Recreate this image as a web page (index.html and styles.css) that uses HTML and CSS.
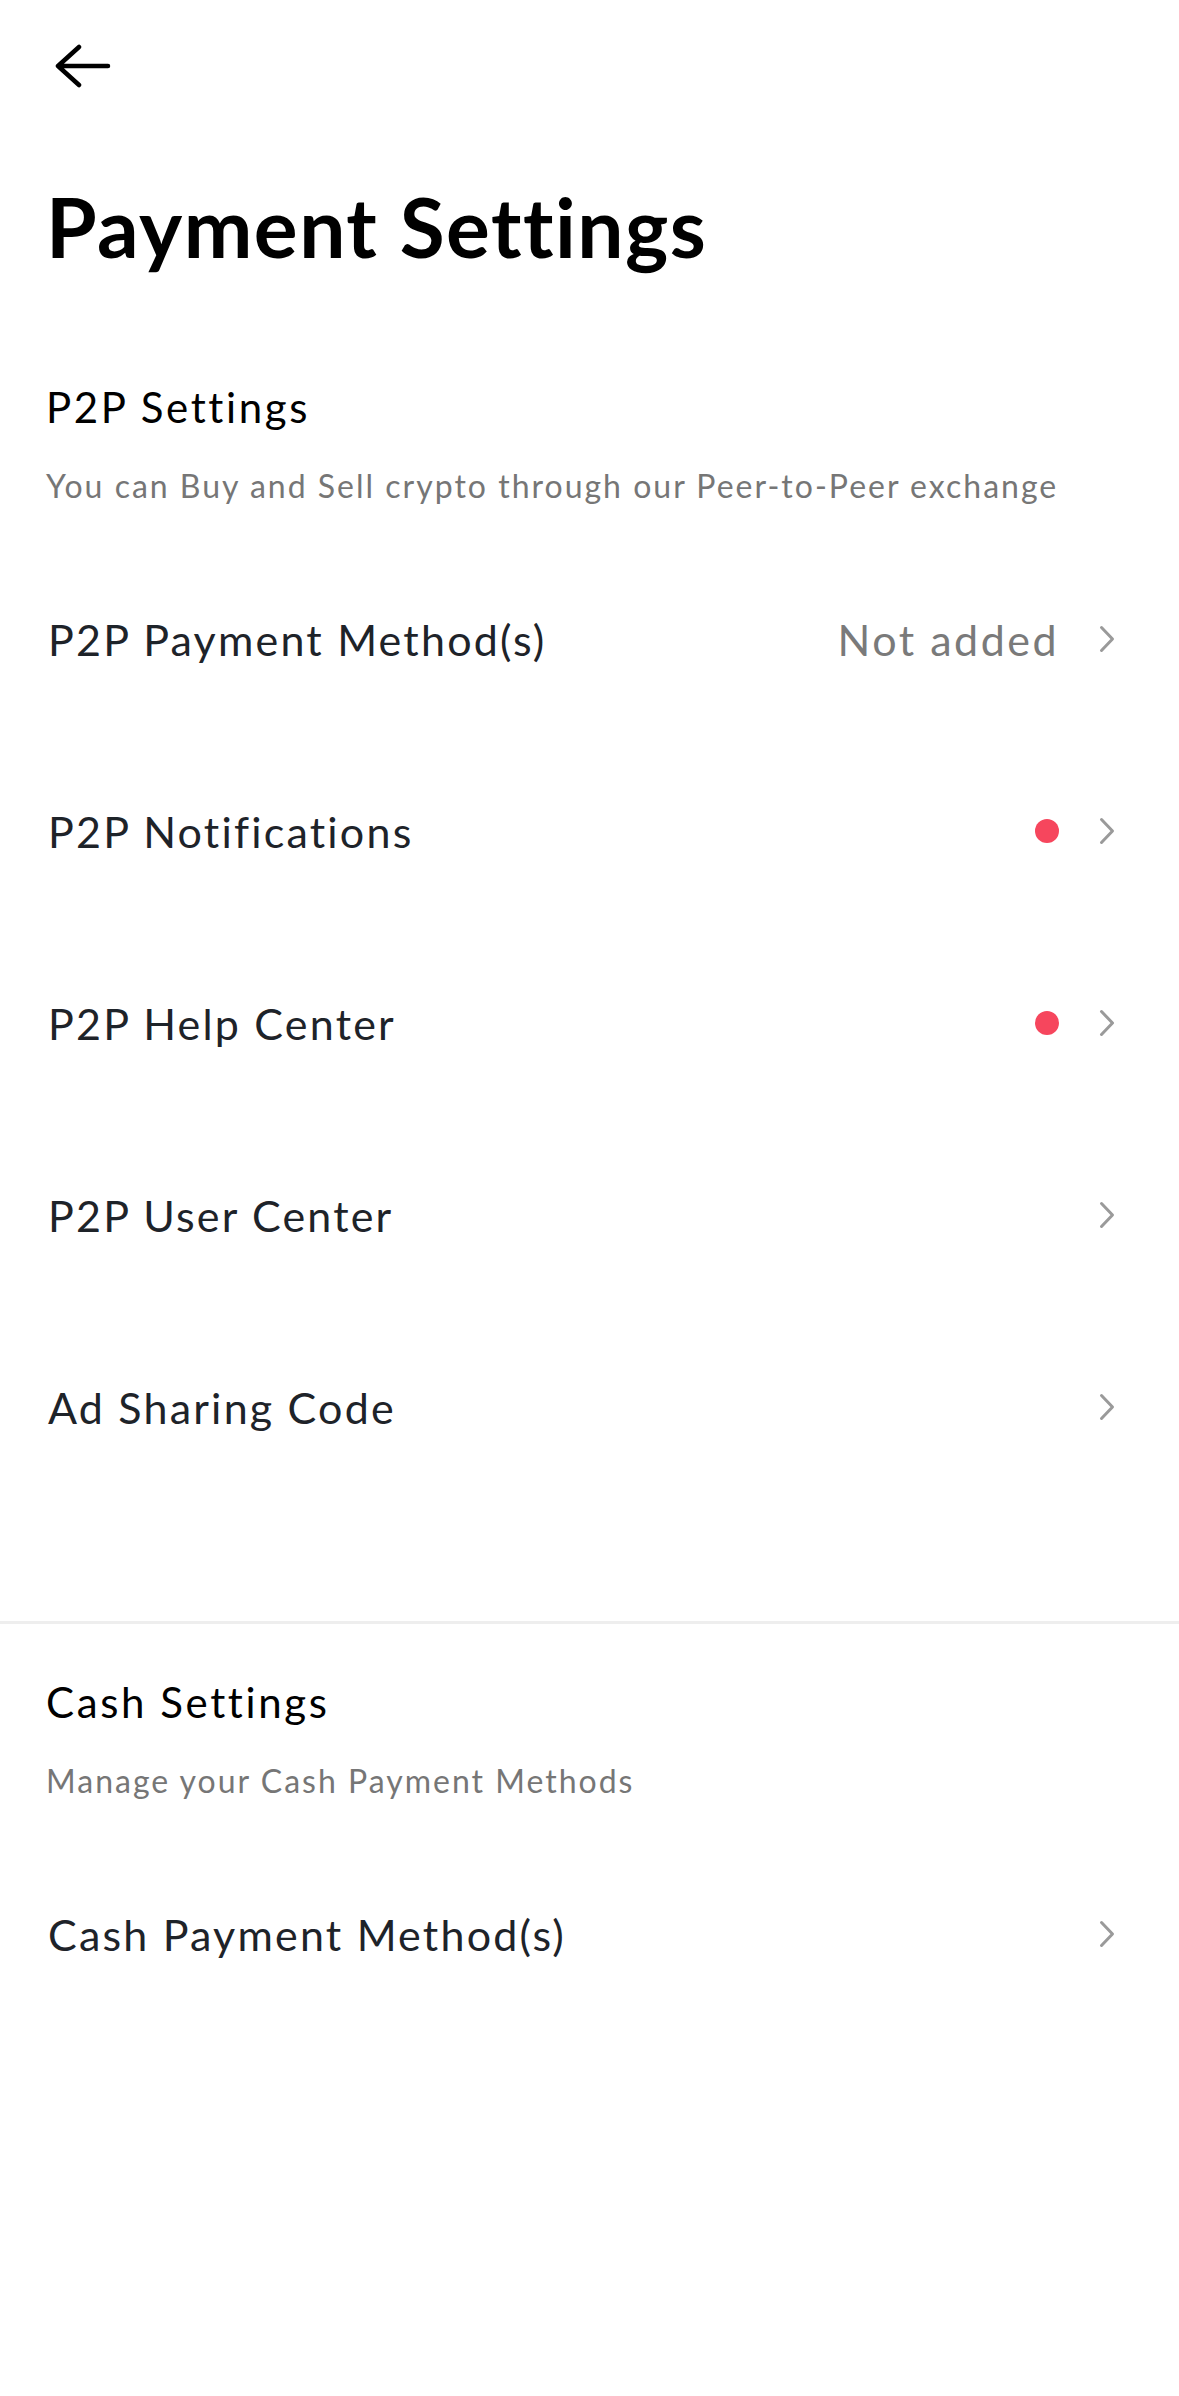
FILE: index.html
```html
<!DOCTYPE html>
<html lang="en">
<head>
<meta charset="utf-8">
<title>Payment Settings</title>
<link rel="stylesheet" href="styles.css">
</head>
<body>
<div class="page">
  <header class="topbar">
    <svg class="back" width="56" height="44" viewBox="0 0 56 44" aria-hidden="true">
      <path d="M24 3 L3 22 L24 41 M3 22 H53" fill="none" stroke="#000" stroke-width="4.5" stroke-linecap="round" stroke-linejoin="round"/>
    </svg>
  </header>

  <h1 class="title">Payment Settings</h1>

  <section class="section">
    <h2 class="section-title">P2P Settings</h2>
    <p class="section-desc">You can Buy and Sell crypto through our Peer-to-Peer exchange</p>
    <ul class="list">
      <li class="row">
        <span class="row-label">P2P Payment Method(s)</span>
        <span class="row-end">
          <span class="row-value">Not added</span>
          <svg class="chev" width="16" height="28" viewBox="0 0 16 28" aria-hidden="true"><path d="M2.5 2.5 L13.5 14 L2.5 25.5" fill="none" stroke="#9a9a9a" stroke-width="3" stroke-linecap="round" stroke-linejoin="round"/></svg>
        </span>
      </li>
      <li class="row">
        <span class="row-label">P2P Notifications</span>
        <span class="row-end">
          <span class="dot"></span>
          <svg class="chev" width="16" height="28" viewBox="0 0 16 28" aria-hidden="true"><path d="M2.5 2.5 L13.5 14 L2.5 25.5" fill="none" stroke="#9a9a9a" stroke-width="3" stroke-linecap="round" stroke-linejoin="round"/></svg>
        </span>
      </li>
      <li class="row">
        <span class="row-label">P2P Help Center</span>
        <span class="row-end">
          <span class="dot"></span>
          <svg class="chev" width="16" height="28" viewBox="0 0 16 28" aria-hidden="true"><path d="M2.5 2.5 L13.5 14 L2.5 25.5" fill="none" stroke="#9a9a9a" stroke-width="3" stroke-linecap="round" stroke-linejoin="round"/></svg>
        </span>
      </li>
      <li class="row">
        <span class="row-label">P2P User Center</span>
        <span class="row-end">
          <svg class="chev" width="16" height="28" viewBox="0 0 16 28" aria-hidden="true"><path d="M2.5 2.5 L13.5 14 L2.5 25.5" fill="none" stroke="#9a9a9a" stroke-width="3" stroke-linecap="round" stroke-linejoin="round"/></svg>
        </span>
      </li>
      <li class="row">
        <span class="row-label">Ad Sharing Code</span>
        <span class="row-end">
          <svg class="chev" width="16" height="28" viewBox="0 0 16 28" aria-hidden="true"><path d="M2.5 2.5 L13.5 14 L2.5 25.5" fill="none" stroke="#9a9a9a" stroke-width="3" stroke-linecap="round" stroke-linejoin="round"/></svg>
        </span>
      </li>
    </ul>
  </section>

  <hr class="divider">

  <section class="section">
    <h2 class="section-title">Cash Settings</h2>
    <p class="section-desc">Manage your Cash Payment Methods</p>
    <ul class="list">
      <li class="row">
        <span class="row-label">Cash Payment Method(s)</span>
        <span class="row-end">
          <svg class="chev" width="16" height="28" viewBox="0 0 16 28" aria-hidden="true"><path d="M2.5 2.5 L13.5 14 L2.5 25.5" fill="none" stroke="#9a9a9a" stroke-width="3" stroke-linecap="round" stroke-linejoin="round"/></svg>
        </span>
      </li>
    </ul>
  </section>
</div>
</body>
</html>
```

FILE: styles.css
```css
* { box-sizing: border-box; }

html, body {
  margin: 0;
  padding: 0;
  background: #ffffff;
}

body {
  font-family: Lato, "Noto Sans", "Liberation Sans", sans-serif;
  color: #1e2329;
}

.page {
  width: 1179px;
  min-height: 2396px;
  background: #ffffff;
}

.topbar {
  height: 132px;
  padding-left: 55px;
  display: flex;
  align-items: center;
}

.back { display: block; }

.title {
  margin: 44px 0 0;
  padding: 0 46px;
  font-size: 82px;
  line-height: 100px;
  font-weight: 700;
  letter-spacing: 1.5px;
  color: #000000;
}

.section-title {
  margin: 103px 0 0;
  padding: 0 46px;
  font-size: 42px;
  line-height: 56px;
  font-weight: 400;
  letter-spacing: 2.6px;
  color: #000000;
}

.divider + .section .section-title { margin-top: 50px; }

.section-desc {
  margin: 29px 0 0;
  padding: 0 46px;
  font-size: 32px;
  line-height: 44px;
  letter-spacing: 2px;
  color: #767676;
}

.list {
  list-style: none;
  margin: 35px 0 0;
  padding: 0 64px 0 48px;
}

.row {
  height: 192px;
  display: flex;
  align-items: center;
  justify-content: space-between;
}

.row-label {
  font-size: 43px;
  letter-spacing: 2.2px;
  color: #1e2329;
}

.row-end {
  display: flex;
  align-items: center;
  gap: 40px;
}

.row-value {
  font-size: 43px;
  letter-spacing: 2.5px;
  color: #7a7a7a;
}

.dot {
  width: 24px;
  height: 24px;
  border-radius: 50%;
  background: #f6465d;
}

.chev { display: block; }

.divider {
  margin: 118px 0 0;
  border: 0;
  height: 3px;
  background: #eeeeee;
}
```
